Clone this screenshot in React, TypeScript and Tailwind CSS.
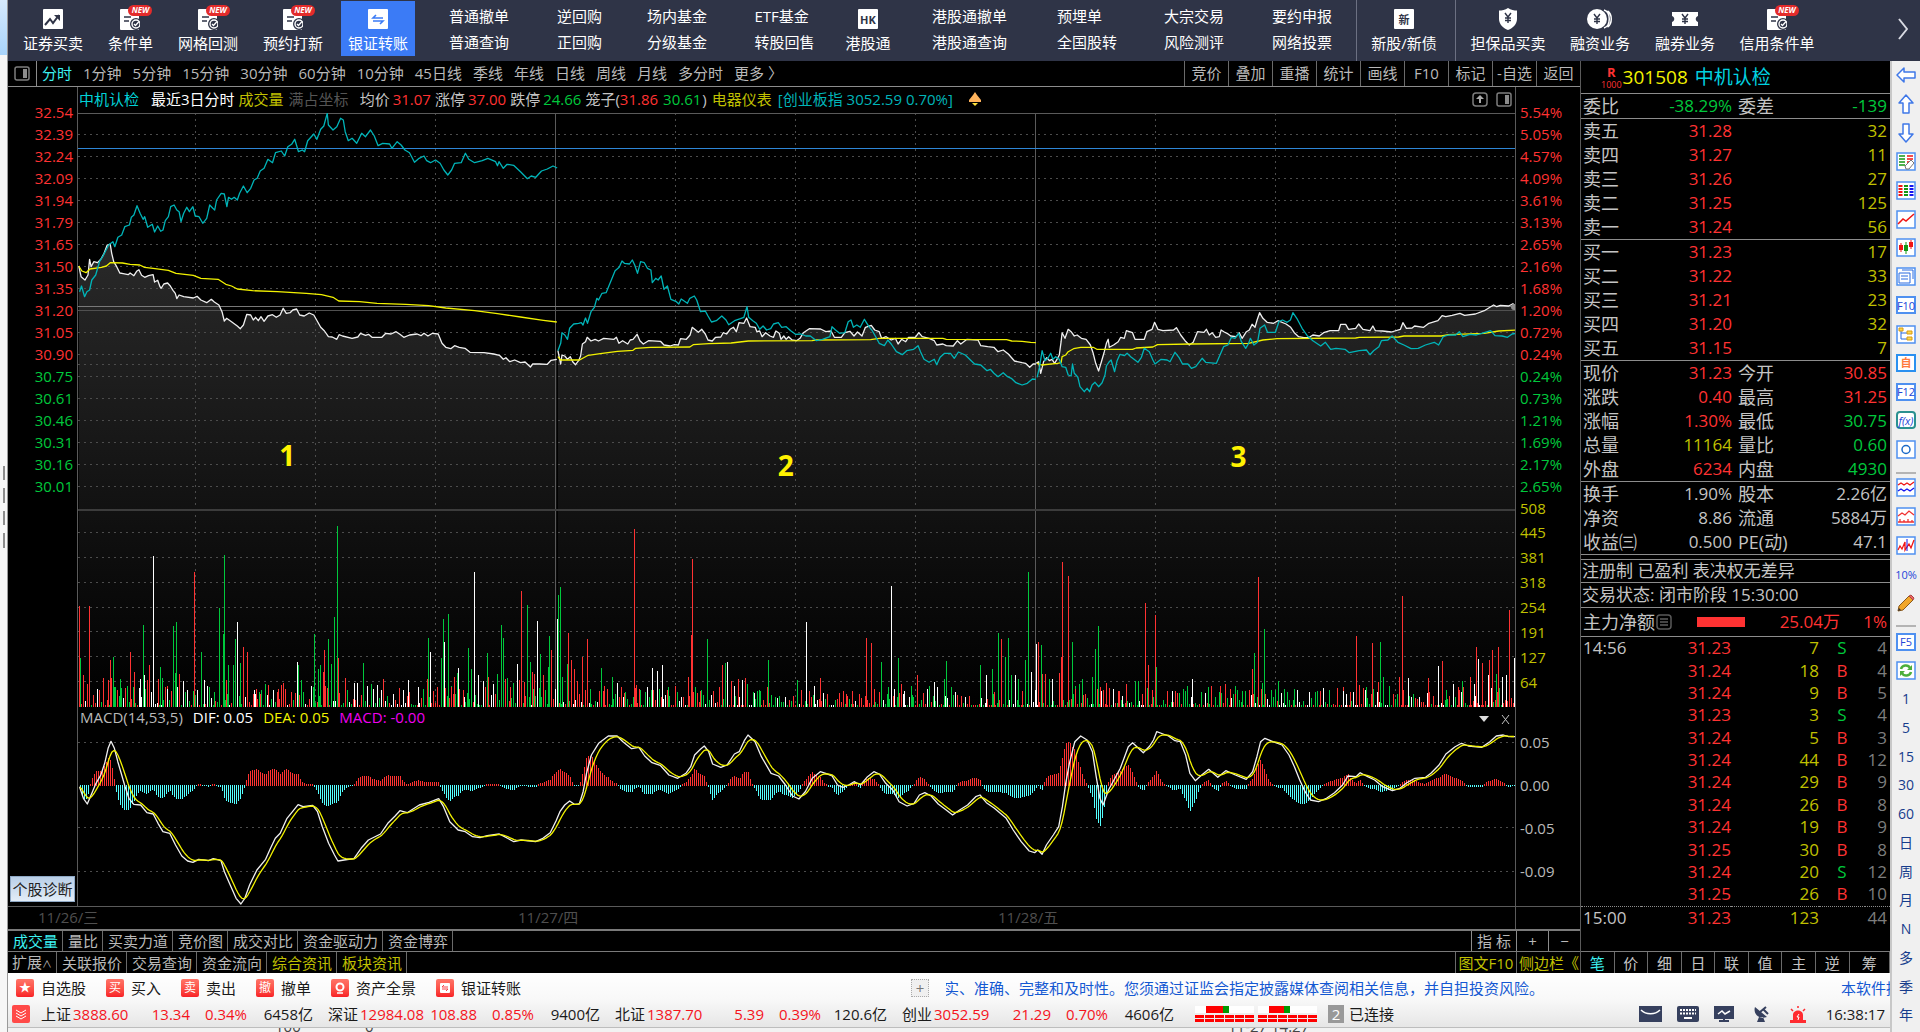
import React from "react";
import { clsx } from "clsx";

type Pt = [number, number];

// "x,y x,y ..." in digitizer units -> chart pixels
const trace = (raw: string, ox: number, oy: number, sx: number): Pt[] =>
  raw
    .trim()
    .split(/\s+/)
    .map((p) => {
      const [x, y] = p.split(",").map(Number);
      return [ox + x / sx, oy + y / 3];
    });

const toPoints = (pts: Pt[]) => pts.map(([x, y]) => `${x.toFixed(1)},${y.toFixed(1)}`).join(" ");

const DAYS = [
  {
    ox: 0,
    oy: 100,
    sx: 2.613,
    price:
      "206,498 212,530 222,540 230,525 234,478 238,500 245,485 255,488 265,475 272,460 280,435 288,432 292,460 297,485 305,500 313,519 322,521 335,524 340,519 350,527 357,514 363,509 370,526 378,532 388,527 400,524 404,546 412,541 418,560 421,565 428,552 438,549 445,558 452,571 458,580 462,596 468,585 480,590 505,594 515,589 525,600 540,608 552,598 560,606 572,615 580,635 586,663 592,655 605,665 620,678 628,686 636,675 645,643 655,645 662,660 668,652 675,662 682,650 690,664 700,648 712,644 722,652 732,645 740,625 748,640 758,638 765,630 775,627 783,645 795,648 808,639 820,645 830,665 838,682 848,693 858,710 868,711 880,718 886,704 895,708 920,715 935,711 942,700 955,706 963,703 972,712 998,712 1008,700 1022,702 1035,695 1045,703 1055,712 1070,705 1090,702 1100,707 1108,700 1118,708 1130,700 1145,702 1155,730 1165,742 1178,746 1188,737 1200,742 1215,745 1228,757 1265,758 1290,762 1305,766 1315,778 1322,773 1332,785 1345,780 1360,788 1372,786 1386,801 1392,792 1410,792 1430,793 1440,781 1455,778",
    avg: "206,498 214,513 225,518 235,507 265,502 278,498 288,488 320,489 340,493 365,495 378,502 400,505 440,511 460,520 505,526 525,535 570,538 590,553 605,558 620,567 660,572 725,575 800,580 840,584 870,592 885,603 940,605 985,610 1060,613 1120,617 1165,624 1240,632 1300,641 1360,651 1420,661 1455,666",
    index:
      "208,575 213,558 221,590 227,575 234,570 240,540 250,525 260,485 268,470 275,455 284,435 295,425 300,440 308,412 318,405 326,380 338,375 343,352 350,345 358,317 366,340 374,358 378,350 386,382 398,373 404,396 412,378 420,394 426,390 432,362 440,350 446,320 455,315 462,330 468,335 473,365 480,340 488,322 495,335 504,320 510,348 520,350 530,370 540,355 548,315 556,325 561,330 566,300 578,280 586,282 593,320 597,292 605,298 612,292 620,300 626,280 636,258 646,278 655,265 664,240 672,235 680,213 690,205 700,178 712,188 720,158 735,153 744,168 752,140 762,133 770,118 780,155 790,150 796,155 804,122 820,102 828,118 838,88 846,78 855,40 858,75 870,90 880,80 890,55 897,60 902,95 910,122 920,115 932,130 945,100 955,110 968,90 978,108 988,137 1000,130 1018,132 1024,145 1038,125 1048,135 1058,150 1070,158 1083,187 1095,175 1108,168 1115,182 1125,188 1138,180 1150,190 1160,210 1170,225 1180,210 1188,190 1205,188 1216,160 1225,178 1240,188 1260,182 1275,175 1295,185 1300,197 1304,185 1315,205 1325,193 1342,196 1360,215 1378,236 1388,228 1400,232 1415,213 1430,207 1445,198 1456,204",
  },
  {
    ox: 540,
    oy: 230,
    sx: 2.904,
    price:
      "52,362 60,402 64,375 72,378 80,388 88,380 95,395 103,404 112,392 118,378 123,342 132,335 137,322 148,333 160,328 170,333 185,325 215,328 222,322 229,340 240,332 255,342 262,330 270,328 282,313 290,332 300,342 315,332 350,334 360,345 378,348 390,344 402,345 408,326 425,328 436,315 442,292 452,300 460,307 470,298 480,312 488,330 500,333 510,322 525,321 532,308 542,312 552,298 562,292 570,305 578,278 592,280 600,264 610,290 625,292 630,305 638,303 645,320 655,308 668,318 678,322 685,303 695,310 700,328 708,318 715,328 722,320 732,330 745,332 755,325 765,308 782,296 815,297 830,305 845,303 855,322 875,322 885,308 900,304 912,318 922,306 935,318 945,292 962,286 972,300 985,305 992,325 1005,320 1020,330 1032,325 1040,342 1050,328 1062,335 1070,322 1090,322 1100,308 1110,320 1130,325 1145,332 1152,345 1170,342 1180,347 1200,348 1212,332 1222,342 1240,328 1272,330 1280,347 1300,350 1318,352 1330,365 1345,360 1360,372 1378,393 1400,398 1410,400 1422,412 1432,402 1440,402",
    avg: "52,380 60,390 115,390 140,376 175,371 225,364 270,361 278,355 320,352 435,351 445,344 490,341 555,339 605,333 790,332 800,330 960,329 985,325 1170,325 1180,328 1355,329 1370,333 1400,334 1425,337 1440,338",
    index:
      "52,362 60,340 64,308 72,315 80,328 86,295 98,282 112,280 120,278 125,285 132,264 138,280 148,245 158,232 165,205 170,210 180,190 192,188 205,155 218,122 230,112 238,93 245,100 260,102 268,90 275,105 283,130 292,95 303,98 312,115 322,120 326,158 336,145 343,150 352,138 360,178 370,168 380,208 396,215 403,222 410,207 428,220 435,205 448,198 455,210 466,245 480,243 488,258 498,276 512,272 528,258 540,270 548,284 565,272 582,266 592,262 601,230 606,262 618,272 628,280 638,298 648,288 658,300 670,296 678,282 692,278 702,292 715,290 728,302 742,313 758,312 772,318 785,318 803,332 820,328 842,320 848,290 858,300 870,310 885,308 895,275 903,270 910,292 920,285 930,292 942,268 955,290 965,302 975,320 985,340 1000,347 1010,330 1020,342 1035,365 1052,374 1065,362 1085,358 1098,347 1105,365 1115,388 1130,397 1145,388 1152,404 1162,382 1175,370 1192,370 1203,385 1215,366 1235,375 1250,390 1262,402 1280,405 1298,422 1308,418 1318,430 1330,440 1345,428 1358,440 1370,446 1382,458 1400,465 1415,460 1430,447 1440,448",
  },
  {
    ox: 1020,
    oy: 90,
    sx: 2.8,
    price:
      "45,820 52,815 58,850 66,815 75,803 82,812 90,808 97,820 105,805 110,795 115,755 118,728 126,745 135,718 143,725 152,738 160,735 172,745 185,748 197,765 205,790 212,820 220,843 228,815 236,785 242,760 247,748 250,772 262,765 275,755 282,742 292,745 298,722 315,728 322,748 348,748 355,725 370,718 377,697 386,718 400,722 430,720 438,713 450,735 462,752 474,765 485,757 497,725 515,727 522,718 530,735 538,728 548,742 558,740 563,720 572,726 580,730 590,738 605,740 614,728 622,745 634,725 642,720 650,703 658,712 664,690 671,668 680,685 692,697 710,700 722,692 745,702 758,712 768,728 780,740 795,743 810,742 820,735 838,738 850,728 868,722 892,722 898,703 912,703 920,718 940,715 948,702 960,718 980,722 988,708 995,722 1015,723 1040,726 1065,718 1072,698 1082,715 1098,714 1105,708 1130,712 1145,700 1170,692 1182,677 1192,680 1210,676 1232,670 1245,676 1275,672 1300,662 1318,650 1326,645 1335,650 1345,646 1368,648 1380,641 1390,650",
    avg: "48,820 60,825 105,820 115,818 118,800 128,795 135,785 150,776 170,772 205,772 215,778 315,778 325,774 372,771 385,764 480,762 640,760 680,750 720,746 940,744 950,742 1060,741 1075,738 1180,738 1200,734 1300,730 1340,723 1390,720",
    index:
      "48,862 55,830 62,782 70,812 78,805 86,790 92,808 100,800 110,808 118,830 128,832 135,855 143,858 147,822 152,850 162,862 168,890 180,905 188,895 195,905 202,885 210,877 220,890 230,878 238,855 242,828 250,815 255,810 265,845 272,812 280,793 292,797 300,790 310,800 330,817 340,802 348,775 362,785 372,810 378,822 395,808 412,810 420,815 434,787 445,802 455,822 470,822 480,835 492,830 510,805 520,817 550,820 560,795 570,770 582,765 592,742 602,745 612,730 620,755 632,775 640,760 645,745 655,765 665,757 672,715 685,705 693,727 715,727 725,695 735,690 748,697 757,690 764,668 775,685 790,715 805,738 820,752 842,768 855,757 870,778 885,775 910,778 922,788 950,782 970,780 980,794 990,782 1005,770 1012,752 1030,750 1042,738 1058,757 1075,765 1095,776 1115,775 1135,765 1160,757 1172,765 1185,740 1200,735 1220,735 1230,725 1240,740 1260,733 1278,735 1300,728 1318,722 1330,737 1350,738 1365,742 1378,732 1390,730",
  },
];

// colour letter, x, top of the bar
const VOL_A =
  "r164,348 g166,503 r171,556 r179,582 r184,348 r192,615 w200,597 r205,600 r212,563 r222,570 r226,510 r230,565 g233,500 g236,592 g247,567 w254,625 r269,485 g275,592 r277,545 w288,567 g295,405 w298,556 r304,570 r308,526 w311,606 w316,198 r325,567 g331,530 g334,565 r340,590 w345,597 g357,408 g360,548 g364,397 r370,552 w378,573 r400,247 w407,600 g414,485 w420,570 g432,592 g441,606 g452,353 g460,432 g462,195 r467,570 g470,526 g480,526 g484,447 w488,397 g496,518 r502,472 r510,485 w525,600 r529,597 r537,612 g546,582 r553,586 w563,600 r573,597 r579,586 r583,578 w613,515 g615,526 g620,570 r637,628 g648,432 g656,537 g661,526 r666,545 r669,480 g677,447 g682,522 g689,380 g695,108 r697,503 r711,563 w731,578 w736,578 r744,615 g749,518 w757,588 g765,582 w770,597 w778,586 w785,600 r790,567 w811,612 w832,600 w842,570 w862,592 r880,567 g883,443 w887,485 g909,503 g914,387 w916,455 g924,372 r930,592 r936,560 g942,548 w945,533 w957,620 g965,473 g971,537 w978,247 w986,556 w997,573 g1005,488 r1007,560 w1018,582 g1025,552 g1033,405 g1038,443 r1041,567 g1046,563 r1053,590 g1058,578 w1067,522 r1070,570 r1075,304 r1082,576 g1087,345 g1094,515 r1098,545 r1102,552 w1107,394 g1115,492 r1120,556 g1130,530 g1132,439 r1136,480 w1149,387 g1151,315 g1156,292 g1160,560 g1170,522 r1172,428 r1179,510 r1184,537 r1191,573 r1201,500 r1206,600 r1211,447 g1218,597 g1239,533 r1247,588 g1262,560 w1273,578 r1282,590 r1287,608 r1308,117 r1312,586 g1321,600 w1335,590 w1345,533 w1355,542 w1366,526 g1378,592 r1420,560 r1426,435 r1428,206 g1433,592 r1445,604 g1459,447 w1467,620 r1490,526 g1495,520 w1499,515 r1508,573 w1514,588 r1522,567 w1530,570 r1536,563 g1541,582 w1556,608 g1565,600";
const VOL_B =
  "g38,603 g52,510 w69,625 g106,570 r114,600 w123,397 w139,588 r150,563 r197,612 r209,603 r235,443 r244,458 r250,597 g263,515 g277,590 w282,288 w288,597 g295,503 r301,582 w307,603 g322,614 r331,556 w363,577 g381,567 g384,514 g394,590 g449,525 w459,556 g470,537 r475,606 g482,428 r487,447 g494,500 g500,443 g506,556 w514,556 g519,567 r526,603 g533,510 g538,247 w543,545 w552,462 r556,455 g562,466 r564,552 r570,552 g576,567 w582,567 r595,548 r599,500 r601,217 r612,259 g620,455 r626,597 g632,582 g639,567 g657,560 g662,477 g668,409 r672,592 r677,600 r683,578 r688,595 r706,603 w714,618 r720,582 g737,573 g743,573 r751,612 r757,338 r762,526 r770,600 r774,375 g777,530 w807,603 r812,604 g820,608 w844,567 w868,610 g874,590 r896,588 r905,582 r914,597 r925,612 g937,603 r950,622 r956,537 g960,488 r968,262 r972,597 g975,578 g979,417 g1005,573 g1016,597 g1035,597 w1062,605 r1082,603 w1125,603 w1131,612 r1138,606 r1150,439 r1155,585 g1168,590 r1180,458 r1191,577 g1194,455 g1201,560 r1230,560 r1236,319 w1248,563 w1268,622 r1285,563 w1303,529 r1311,514 g1318,600 w1332,582 r1340,592 g1348,573 r1362,560 w1370,582 r1374,472 w1378,507 r1385,518 w1396,555 r1399,510 r1404,480 g1411,552 r1416,472 w1423,560 w1430,556 r1436,360 w1448,503";

const VOL_COLORS: Record<string, string> = { r: "#ff3232", g: "#00c83c", w: "#ffffff" };
const VOL_BASE = 707;

type Bar = { x: number; top: number; fill: string };

const parseBars = (raw: string, ox: number, sx: number): Bar[] =>
  raw.split(" ").map((b) => {
    const [x, y] = b.slice(1).split(",").map(Number);
    return { x: Math.min(1514, Math.round(ox + x / sx)), top: Math.round(490 + y / 3), fill: VOL_COLORS[b[0]] };
  });

const quietBars = (): Bar[] => {
  const bars: Bar[] = [];
  let seed = 11;
  const rand = () => {
    seed = (seed * 16807) % 2147483647;
    return seed / 2147483647;
  };
  for (let x = 79; x < 1515; x += 2) {
    const h = 2 + Math.floor(Math.pow(rand(), 2.2) * 20);
    const c = "rgwrg"[Math.floor(rand() * 5)];
    bars.push({ x, top: VOL_BASE - h, fill: VOL_COLORS[c] });
  }
  return bars;
};

const VOLUME = [...quietBars(), ...parseBars(VOL_A, 0, 2.063), ...parseBars(VOL_B, 740, 1.867)];

const DIF: Pt[] = [
  ...trace(
    "164,890 172,925 180,942 188,915 198,880 208,855 216,820 223,775 229,754 236,775 243,815 250,850 258,890 266,925 276,943 290,945 303,968 316,972 326,1000 336,1025 350,1030 362,1065 375,1098 387,1113 398,1117 410,1108 430,1112 440,1106 456,1112 463,1145 475,1185 487,1225 497,1242 505,1225 515,1185 530,1140 548,1108 558,1075 568,1045 578,1030 592,985 605,962 615,944 625,950 645,946 655,965 665,1010 678,1060 690,1095 697,1113 710,1110 730,1106 745,1075 760,1050 785,1032 800,1000 815,978 825,962 840,968 865,945 885,937 905,926 915,950 928,995 945,1020 960,1025 975,1040 990,1043 1005,1037 1030,1032 1045,1043 1060,1055 1075,1050 1105,1055 1120,1045 1135,1028 1147,993 1155,965 1165,945 1175,933 1185,943 1195,942 1203,905 1210,850 1220,795 1235,760 1255,738 1273,738 1285,755 1303,776 1318,772 1330,798 1345,818 1362,826 1380,855 1398,865 1415,850 1425,830 1433,795 1445,778 1453,768 1462,785 1470,822 1487,832 1500,825 1515,792 1525,785",
    0, 490, 2.063
  ),
  ...trace(
    "8,752 15,735 28,755 40,800 58,850 72,858 85,885 98,918 110,927 122,905 135,865 150,845 160,850 172,858 182,885 192,892 203,885 213,875 225,885 238,860 250,845 260,852 272,880 285,900 297,935 312,948 325,940 335,915 345,908 357,918 370,942 385,960 397,975 410,960 425,945 440,920 448,915 460,938 475,955 497,985 510,1020 525,1055 540,1083 550,1088 556,1080 564,1093 572,1065 585,1035 595,1010 602,950 608,880 615,820 625,755 636,738 648,750 658,785 665,860 672,925 678,945 688,900 700,865 710,835 718,800 725,770 733,758 742,772 753,788 765,768 772,750 778,725 790,732 800,738 812,752 822,755 832,795 840,850 850,872 862,855 875,838 892,862 907,842 925,855 945,868 957,845 965,800 972,755 980,745 995,755 1012,765 1025,795 1035,830 1045,870 1055,905 1065,930 1080,935 1095,925 1110,908 1125,885 1135,858 1150,860 1158,848 1172,860 1185,870 1200,890 1218,902 1232,895 1245,878 1260,865 1280,862 1290,850 1305,825 1318,792 1335,770 1347,760 1360,768 1385,772 1400,755 1412,738 1425,735 1435,740 1448,740",
    740, 490, 1.867
  ),
];

const valueAt = (pts: Pt[], x: number) => {
  for (let i = 1; i < pts.length; i++) {
    if (pts[i][0] >= x) {
      const [x0, y0] = pts[i - 1];
      const [x1, y1] = pts[i];
      return y0 + ((y1 - y0) * (x - x0)) / (x1 - x0 || 1);
    }
  }
  return pts[pts.length - 1][1];
};

// DEA is the 5 period EMA of DIF, the histogram is twice the spread
const macd = () => {
  const dea: Pt[] = [];
  const hist: { x: number; h: number }[] = [];
  let ema = DIF[0][1];
  for (let x = 80; x <= 1514; x += 2) {
    const dif = valueAt(DIF, x);
    ema = ema + (dif - ema) / 3;
    dea.push([x, ema]);
    hist.push({ x, h: Math.round((ema - dif) * 2) });
  }
  return { dea, hist };
};
const { dea: DEA, hist: HIST } = macd();

const PRICES = ["32.54", "32.39", "32.24", "32.09", "31.94", "31.79", "31.65", "31.50", "31.35", "31.20", "31.05", "30.90", "30.75", "30.61", "30.46", "30.31", "30.16", "30.01"];
const PERCENTS = ["5.54%", "5.05%", "4.57%", "4.09%", "3.61%", "3.13%", "2.65%", "2.16%", "1.68%", "1.20%", "0.72%", "0.24%", "0.24%", "0.73%", "1.21%", "1.69%", "2.17%", "2.65%"];
const VOLUMES = ["445", "381", "318", "254", "191", "127", "64"];
const MACD_TICKS = ["0.05", "0.00", "-0.05", "-0.09"];

/* ---------- top toolbar ---------- */

const DocTrend = () => (
  <svg width="20" height="20" viewBox="0 0 20 20">
    <rect width="20" height="20" rx="1" fill="#fff" />
    <path d="M2 16l5-6 3 4 6-8" fill="none" stroke="#2f3447" strokeWidth="2" />
    <path d="M11 6h6v6z" fill="#2f3447" />
  </svg>
);

const DocCheck = () => (
  <span className="relative">
    <svg width="20" height="21" viewBox="0 0 20 21">
      <path d="M0 1a1 1 0 011-1h18v21H1a1 1 0 01-1-1z" fill="#fff" />
      <path d="M4 8h7M4 12h5" stroke="#2f3447" strokeWidth="1.5" />
      <circle cx="16" cy="15" r="6" fill="#2f3447" />
      <circle cx="16" cy="15" r="4" fill="none" stroke="#fff" strokeWidth="1.4" />
      <path d="M14 15l1.500 1.500L19 12.500" fill="none" stroke="#fff" strokeWidth="1.3" />
    </svg>
    <span className="absolute -top-1 left-2 flex h-[11px] w-6 items-center justify-center rounded-full bg-[#e32b2b] text-[8px] font-bold italic leading-none text-white">
      NEW
    </span>
  </span>
);

const Transfer = () => (
  <svg width="20" height="20" viewBox="0 0 20 20">
    <rect width="20" height="20" rx="1" fill="#fff" />
    <path d="M15 9H5l3-3M5 12h10l-3 3" fill="none" stroke="#3b7bf6" strokeWidth="1.6" />
  </svg>
);

const Yen = ({ x }: { x: number }) => (
  <path d={`M${x - 3} 5l3 4 3-4M${x} 9v6M${x - 3} 10h6M${x - 3} 12.500h6`} fill="none" stroke="#2f3447" strokeWidth="1.4" />
);

const Shield = () => (
  <svg width="20" height="22" viewBox="0 0 20 22">
    <path d="M10 0c3 2 6 2.500 9 2.500V11c0 5-4 9-9 11-5-2-9-6-9-11V2.500C4 2.500 7 2 10 0z" fill="#fff" />
    <Yen x={10} />
  </svg>
);

const Coins = () => (
  <svg width="25" height="20" viewBox="0 0 25 20">
    <ellipse cx="10" cy="10" rx="10" ry="10" fill="#fff" />
    <path d="M17 1c7 2 7 16 0 18M20.500 2c5 3 5 13 0 16" fill="none" stroke="#fff" strokeWidth="1.5" />
    <Yen x={10} />
  </svg>
);

const Ticket = () => (
  <svg width="26" height="20" viewBox="0 0 26 20">
    <path d="M0 3h26v4c-3 1-3 5 0 6v4H0v-4c3-1 3-5 0-6z" fill="#fff" />
    <Yen x={13} />
  </svg>
);

const GlyphTile = ({ children }: { children: React.ReactNode }) => (
  <span className="flex size-5 items-center justify-center rounded-[1px] bg-white text-[11px] font-bold leading-none text-[#2f3447]">{children}</span>
);

const IconItem = ({ icon, label, active, className }: { icon: React.ReactNode; label: string; active?: boolean; className?: string }) => (
  <div className={clsx("flex justify-center", className)}>
    <button
      className={clsx(
        "mt-px flex h-[55px] flex-col items-center gap-1 whitespace-nowrap pt-2 leading-5",
        active && "bg-[#3b7bf6] px-[7px]"
      )}
    >
      <span className="flex h-5 items-center">{icon}</span>
      {label}
    </button>
  </div>
);

const PairItem = ({ items, className }: { items: [string, string]; className?: string }) => (
  <div className={clsx("flex justify-center", className)}>
    <div className="flex flex-col items-start gap-[6px] whitespace-nowrap pt-[6px] leading-5">
      <button>{items[0]}</button>
      <button>{items[1]}</button>
    </div>
  </div>
);

const Toolbar = () => (
  <header className="grid h-[61px] grid-cols-[90fr_65fr_90fr_80fr_90fr_112fr_89fr_106fr_109fr_58fr_145fr_90fr_124fr_100fr_99fr_105fr_80fr_90fr_94fr_96fr] bg-[#2f3447] text-[15px] text-white">
    <IconItem icon={<DocTrend />} label="证券买卖" />
    <IconItem icon={<DocCheck />} label="条件单" />
    <IconItem icon={<DocCheck />} label="网格回测" />
    <IconItem icon={<DocCheck />} label="预约打新" />
    <IconItem icon={<Transfer />} label="银证转账" active />
    <PairItem items={["普通撤单", "普通查询"]} />
    <PairItem items={["逆回购", "正回购"]} />
    <PairItem items={["场内基金", "分级基金"]} />
    <PairItem items={["ETF基金", "转股回售"]} />
    <IconItem icon={<GlyphTile>HK</GlyphTile>} label="港股通" />
    <PairItem items={["港股通撤单", "港股通查询"]} />
    <PairItem items={["预埋单", "全国股转"]} />
    <PairItem items={["大宗交易", "风险测评"]} />
    <PairItem items={["要约申报", "网络投票"]} className="pr-2" />
    <IconItem icon={<GlyphTile>新</GlyphTile>} label="新股/新债" className="border-l border-[#6c7082] pr-1" />
    <IconItem icon={<Shield />} label="担保品买卖" className="border-l border-[#6c7082]" />
    <IconItem icon={<Coins />} label="融资业务" />
    <IconItem icon={<Ticket />} label="融券业务" />
    <IconItem icon={<DocCheck />} label="信用条件单" />
    <button className="flex items-center justify-end pb-1 pr-3" aria-label="更多">
      <svg width="10" height="22" viewBox="0 0 10 22">
        <path d="M1 1l8 10-8 10" fill="none" stroke="#d8dae2" strokeWidth="2" />
      </svg>
    </button>
  </header>
);

/* ---------- chart column ---------- */

const PanelGlyph = () => (
  <svg width="16" height="15" viewBox="0 0 16 15">
    <rect x="1" y="1" width="14" height="13" rx="2" fill="none" stroke="#7d7d7d" strokeWidth="1.500" />
    <rect x="9" y="3" width="4" height="9" fill="#8b8b8b" />
  </svg>
);

const PERIODS = ["分时", "1分钟", "5分钟", "15分钟", "30分钟", "60分钟", "10分钟", "45日线", "季线", "年线", "日线", "周线", "月线", "多分时", "更多 〉"];
const ACTIONS = ["竞价", "叠加", "重播", "统计", "画线", "F10", "标记", "-自选", "返回"];

const PeriodBar = () => (
  <nav className="flex h-[26px] items-stretch whitespace-nowrap border-b border-[#8c8c8c] text-[#b9b9b9]">
    <button className="flex w-[29px] items-center justify-center border-r border-[#8c8c8c]" aria-label="侧栏">
      <PanelGlyph />
    </button>
    <div className="flex gap-[11px] pl-[5px]">
      {PERIODS.map((p, i) => (
        <button key={p} className={clsx(i === 0 && "text-[#3cf0f0]")}>
          {p}
        </button>
      ))}
    </div>
    <div className="ml-auto flex">
      {ACTIONS.map((a) => (
        <button key={a} className="w-11 border-l border-[#6a6a6a]">
          {a}
        </button>
      ))}
    </div>
  </nav>
);

const InfoLine = () => (
  <div className="flex h-[26px] items-center whitespace-nowrap pb-[2px] pl-px text-[#c4c4c4]">
    <span className="text-[#00d2d8]">中机认检</span>
    <span className="ml-3 text-white">最近3日分时</span>
    <span className="ml-1 text-[#c0c000]">成交量</span>
    <span className="ml-[5px] text-[#555]">满占坐标</span>
    <span className="ml-[11px]">均价</span>
    <span className="ml-[3px] text-[#ff3232]">31.07</span>
    <span className="ml-1">涨停</span>
    <span className="ml-[3px] text-[#ff3232]">37.00</span>
    <span className="ml-1">跌停</span>
    <span className="ml-[3px] text-[#00c83c]">24.66</span>
    <span className="ml-1">笼子(</span>
    <span className="text-[#ff3232]">31.86</span>
    <span className="ml-[5px] text-[#00c83c]">30.61</span>
    <span className="ml-px">)</span>
    <span className="ml-[5px] text-[#c0c000]">电器仪表</span>
    <span className="ml-[6px] text-[#00b4b8]">[创业板指 3052.59 0.70%]</span>
    <svg className="ml-4" width="12" height="14" viewBox="0 0 12 14">
      <path d="M6 0l2 3 4 5v2H0V8l4-5z" fill="#ffb35c" />
      <path d="M3 11h6l-3 3z" fill="#ffe23c" />
    </svg>
    <span className="ml-auto flex gap-2 pr-[3px]">
      <svg width="16" height="15" viewBox="0 0 16 15">
        <rect x="1" y="1" width="14" height="13" rx="3" fill="none" stroke="#7d7d7d" strokeWidth="1.500" />
        <path d="M8 3l4 4H9v4H7V7H4z" fill="#aaa" />
      </svg>
      <PanelGlyph />
    </span>
  </div>
);

const ROWS = Array.from({ length: 17 }, (_, i) => 134.5 + i * 22).filter((y) => y !== 310.5);
const VOL_ROWS = [532.5, 557.5, 582.5, 607.5, 631.5, 656.5, 681.5];
const COLS = [195.5, 315.5, 435.5, 675.5, 795.5, 915.5, 1155.5, 1275.5, 1395.5];

const PriceChart = () => (
  <div className="relative">
    <svg className="block h-[594px] w-full" viewBox="78 113 1437 594" preserveAspectRatio="none">
      <defs>
        <linearGradient id="shade" gradientUnits="userSpaceOnUse" x1="0" y1="113" x2="0" y2="707">
          <stop offset="0" stopColor="#353535" />
          <stop offset="1" stopColor="#000" />
        </linearGradient>
      </defs>
      {DAYS.map((d, i) => {
        const pts = trace(d.price, d.ox, d.oy, d.sx);
        const first = pts[0][0];
        const last = pts[pts.length - 1][0];
        return <polygon key={i} points={`${first},707 ${toPoints(pts)} ${last},707`} fill="url(#shade)" />;
      })}
      <g shapeRendering="crispEdges" fill="none">
        <g stroke="#4c4c4c" strokeDasharray="2 4">
          {[...ROWS, 364.5, ...VOL_ROWS].map((y) => (
            <path key={y} d={`M78 ${y}H1515`} />
          ))}
          {COLS.map((x) => (
            <path key={x} d={`M${x} 113V707`} />
          ))}
        </g>
        <path d="M78 113.500H1515" stroke="#5a5a5a" />
        <path d="M555.500 113V707M1035.500 113V707" stroke="#5a5a5a" />
        <path d="M78 306.500H1515" stroke="#787878" />
        <path d="M78 310.500H1515" stroke="#505050" />
        <path d="M78 510H1515" stroke="#3c3c3c" strokeWidth="2" />
        <path d="M78 148.500H1515" stroke="#2e86d6" />
      </g>
      <g shapeRendering="crispEdges">
        {VOLUME.map((b, i) => (
          <rect key={i} x={b.x} y={b.top} width="1" height={VOL_BASE - b.top} fill={b.fill} />
        ))}
      </g>
      {DAYS.map((d, i) => (
        <g key={i} fill="none" strokeWidth="1.300" strokeLinejoin="round">
          <polyline points={toPoints(trace(d.price, d.ox, d.oy, d.sx))} stroke="#f0f0f0" />
          <polyline points={toPoints(trace(d.avg, d.ox, d.oy, d.sx))} stroke="#f2f200" />
          <polyline points={toPoints(trace(d.index, d.ox, d.oy, d.sx))} stroke="#00b4b8" />
        </g>
      ))}
      <circle cx="1514" cy="307" r="3" fill="#8c8c8c" />
    </svg>
    <span className="absolute left-[14%] top-[322px] text-[28px] font-bold leading-10 text-[#fff200]">1</span>
    <span className="absolute left-[48.7%] top-[332px] text-[28px] font-bold leading-10 text-[#fff200]">2</span>
    <span className="absolute left-[80.2%] top-[323px] text-[28px] font-bold leading-10 text-[#fff200]">3</span>
  </div>
);

const MacdChart = () => (
  <>
    <div className="flex h-[22px] items-center gap-[10px] whitespace-nowrap pb-[2px] pl-[2px] text-[#b9b9b9]">
      <span>MACD(14,53,5)</span>
      <span className="text-white">DIF: 0.05</span>
      <span className="text-[#f2f200]">DEA: 0.05</span>
      <span className="text-[#f000f0]">MACD: -0.00</span>
      <span className="ml-auto flex items-center gap-3 pr-[5px] pt-1">
        <button aria-label="展开">
          <svg width="10" height="6" viewBox="0 0 10 6">
            <path d="M0 0h10L5 6z" fill="#ddd" />
          </svg>
        </button>
        <button aria-label="关闭">
          <svg width="9" height="9" viewBox="0 0 9 9">
            <path d="M1 0l7 9M8 0L1 9" stroke="#c4c4c4" />
          </svg>
        </button>
      </span>
    </div>
    <svg className="block h-[177px] w-full" viewBox="78 729 1437 177" preserveAspectRatio="none">
      <g shapeRendering="crispEdges">
        <g stroke="#4c4c4c" strokeDasharray="2 4">
          <path d="M78 742.500H1515M78 827.500H1515M78 871.500H1515" />
        </g>
        {HIST.map(({ x, h }) =>
          h > 0 ? (
            <rect key={x} x={x} y={785 - h} width="1" height={h + 1} fill="#ff3232" />
          ) : (
            <rect key={x} x={x} y="785" width="1" height={1 - h} fill="#54ffff" />
          )
        )}
      </g>
      <g fill="none" strokeWidth="1.300" strokeLinejoin="round">
        <polyline points={toPoints(DIF)} stroke="#f0f0f0" />
        <polyline points={toPoints(DEA)} stroke="#f2f200" />
      </g>
    </svg>
  </>
);

const ChartArea = () => (
  <div className="flex border-b border-[#5a5a5a]">
    <div className="flex w-[70px] shrink-0 flex-col border-r border-[#5a5a5a] pt-[14px]">
      {PRICES.map((p, i) => (
        <span key={p} className={clsx("h-[22px] pr-1 text-right leading-[22px]", i < 12 ? "text-[#ff3232]" : "text-[#00c83c]")}>
          {p}
        </span>
      ))}
      <button className="mx-[2px] mb-1 mt-auto h-[26px] whitespace-nowrap border border-[#8fa9c6] bg-linear-to-b from-[#b9cfe8] to-[#e3edf8] text-[#222]">
        个股诊断
      </button>
    </div>
    <div className="min-w-0 flex-1 border-r border-[#5a5a5a]">
      <InfoLine />
      <PriceChart />
      <MacdChart />
    </div>
    <div className="flex w-16 shrink-0 flex-col pl-1 pt-[14px]">
      {PERCENTS.map((p, i) => (
        <span key={i} className={clsx("h-[22px] leading-[22px]", i < 12 ? "text-[#ff3232]" : "text-[#00c83c]")}>
          {p}
        </span>
      ))}
      <span className="mb-px h-[22px] leading-[22px] text-[#c0c000]">508</span>
      {VOLUMES.map((v) => (
        <span key={v} className="h-[25px] leading-[25px] text-[#c0c000]">
          {v}
        </span>
      ))}
      {MACD_TICKS.map((v, i) => (
        <span key={v} className={clsx("h-[43px] leading-[43px] text-[#b9b9b9]", i === 0 && "mt-[26px]")}>
          {v}
        </span>
      ))}
    </div>
  </div>
);

const DateRow = () => (
  <div className="flex h-[22px] leading-5 text-[#4f4f4f]">
    <div className="grid flex-1 grid-cols-[480fr_480fr_517fr] border-r border-[#5a5a5a] pl-[30px]">
      <span>11/26/三</span>
      <span>11/27/四</span>
      <span>11/28/五</span>
    </div>
    <div className="w-16" />
  </div>
);

const INDICATORS = ["成交量", "量比", "买卖力道", "竞价图", "成交对比", "资金驱动力", "资金博弈"];
const EXTRAS = ["关联报价", "交易查询", "资金流向", "综合资讯", "板块资讯"];

const IndicatorTabs = () => (
  <>
    <nav className="flex h-[22px] whitespace-nowrap border-t-2 border-[#7a7a7a] leading-5 text-[#b9b9b9]">
      {INDICATORS.map((t, i) => (
        <button key={t} className={clsx("border-r border-[#6a6a6a] pl-[5px] pr-1", i === 0 && "text-[#3cf0f0]")}>
          {t}
        </button>
      ))}
      <span className="ml-auto flex">
        <button className="w-[45px] border-l border-[#8c8c8c]">指 标</button>
        <button className="w-8 border-l border-[#8c8c8c]">+</button>
        <button className="w-8 border-l border-[#8c8c8c]">−</button>
      </span>
    </nav>
    <nav className="flex h-[22px] whitespace-nowrap border-t border-[#7a7a7a] leading-5 text-[#b9b9b9]">
      <button className="w-[49px] border-r border-[#6a6a6a]">
        扩展<span className="text-[10px]">∧</span>
      </button>
      {EXTRAS.map((t, i) => (
        <button key={t} className={clsx("border-r border-[#6a6a6a] pl-[5px] pr-1", i > 2 && "text-[#c0c000]")}>
          {t}
        </button>
      ))}
      <span className="ml-auto flex text-[#c0c000]">
        <button className="w-[61px] border-l border-[#6a6a6a]">图文F10</button>
        <button className="w-16 overflow-hidden border-l border-[#6a6a6a] pl-[2px] text-left">侧边栏《</button>
      </span>
    </nav>
  </>
);

/* ---------- quote panel ---------- */

const RED = "text-[#ff3232]";
const GREEN = "text-[#00c83c]";
const YELLOW = "text-[#c0c000]";
const GRAY = "text-[#c4c4c4]";

const ASKS = [["卖五", "31.28", "32"], ["卖四", "31.27", "11"], ["卖三", "31.26", "27"], ["卖二", "31.25", "125"], ["卖一", "31.24", "56"]];
const BIDS = [["买一", "31.23", "17"], ["买二", "31.22", "33"], ["买三", "31.21", "23"], ["买四", "31.20", "32"], ["买五", "31.15", "7"]];

const STATS = [
  ["现价", "31.23", RED, "今开", "30.85", RED],
  ["涨跌", "0.40", RED, "最高", "31.25", RED],
  ["涨幅", "1.30%", RED, "最低", "30.75", GREEN],
  ["总量", "11164", YELLOW, "量比", "0.60", GREEN],
  ["外盘", "6234", RED, "内盘", "4930", GREEN],
];
const BASICS = [
  ["换手", "1.90%", GRAY, "股本", "2.26亿", GRAY],
  ["净资", "8.86", GRAY, "流通", "5884万", GRAY],
  ["收益㈢", "0.500", GRAY, "PE(动)", "47.1", GRAY],
];
const SUMMARY = [["委比", "-38.29%", GREEN, "委差", "-139", GREEN]];

const TICKS = [
  ["14:56", "31.23", "7", "S", "4"],
  ["", "31.24", "18", "B", "4"],
  ["", "31.24", "9", "B", "5"],
  ["", "31.23", "3", "S", "4"],
  ["", "31.24", "5", "B", "3"],
  ["", "31.24", "44", "B", "12"],
  ["", "31.24", "29", "B", "9"],
  ["", "31.24", "26", "B", "8"],
  ["", "31.24", "19", "B", "9"],
  ["", "31.25", "30", "B", "8"],
  ["", "31.24", "20", "S", "12"],
  ["", "31.25", "26", "B", "10"],
  ["15:00", "31.23", "123", "", "44"],
];

const OrderTable = ({ rows }: { rows: string[][] }) => (
  <table className="w-full table-fixed border-separate border-spacing-0 border-b border-[#8c8c8c]">
    <tbody>
      {rows.map(([label, price, qty]) => (
        <tr key={label} className="h-6">
          <th className="w-[60px] p-0 pl-[2px] text-left text-[18px] font-normal">{label}</th>
          <td className={clsx("w-[91px] p-0 text-right", RED)}>{price}</td>
          <td className={clsx("p-0 pr-[3px] text-right", YELLOW)}>{qty}</td>
        </tr>
      ))}
    </tbody>
  </table>
);

const PairTable = ({ rows }: { rows: string[][] }) => (
  <table className="w-full table-fixed border-separate border-spacing-0 border-b border-[#8c8c8c]">
    <tbody>
      {rows.map(([l1, v1, c1, l2, v2, c2]) => (
        <tr key={l1} className="h-6 whitespace-nowrap">
          <th className="w-[60px] p-0 pl-[2px] text-left text-[18px] font-normal">{l1}</th>
          <td className={clsx("w-[91px] p-0 text-right", c1)}>{v1}</td>
          <th className="w-[70px] p-0 pl-[6px] text-left text-[18px] font-normal">{l2}</th>
          <td className={clsx("p-0 pr-[3px] text-right", c2)}>{v2}</td>
        </tr>
      ))}
    </tbody>
  </table>
);

const QUOTE_TABS = ["笔", "价", "细", "日", "联", "值", "主", "逆", "筹"];

const QuotePanel = () => (
  <aside className="flex w-[310px] shrink-0 flex-col border-l border-[#5a5a5a] text-[17px] leading-[22px] text-[#c4c4c4]">
    <h1 className="flex h-[33px] items-center border-b border-[#8c8c8c] pl-[20px] text-[19px]">
      <span className={clsx("flex flex-col items-center text-[9px] leading-[10px]", RED)}>
        <b className="text-[13px] leading-4">R</b>
        <span>1000</span>
      </span>
      <span className="ml-px text-[#f2f200]">301508</span>
      <span className="ml-[7px] text-[#00d2e0]">中机认检</span>
    </h1>
    <PairTable rows={SUMMARY} />
    <OrderTable rows={ASKS} />
    <OrderTable rows={BIDS} />
    <PairTable rows={STATS} />
    <PairTable rows={BASICS} />
    <p className="mt-1 h-6 border-b border-t border-[#8c8c8c] pl-px">注册制 已盈利 表决权无差异</p>
    <p className="h-[25px] border-b border-[#8c8c8c] pl-px leading-6">交易状态: 闭市阶段 15:30:00</p>
    <div className="flex h-[29px] items-center border-b border-[#8c8c8c] pl-[2px]">
      <span className="w-[73px] whitespace-nowrap text-[18px]">主力净额</span>
      <svg width="16" height="16" viewBox="0 0 16 16">
        <rect x="1" y="1" width="14" height="14" rx="3" fill="none" stroke="#5a5a5a" strokeWidth="1.500" />
        <path d="M4 5h8M4 8h8M4 11h8" stroke="#8c8c8c" />
      </svg>
      <span className="ml-[25px] h-[10px] w-12 bg-[#ff3232]" />
      <span className={clsx("ml-auto", RED)}>25.04万</span>
      <span className={clsx("w-[50px] pr-[3px] text-right", RED)}>1%</span>
    </div>
    <table className="h-[292px] w-full table-fixed">
      <tbody>
        {TICKS.map(([time, price, vol, side, n], i) => (
          <tr key={i} className={clsx(i === 12 && "border-t border-dotted border-[#8c8c8c]")}>
            <td className="w-[60px] p-0 pl-[2px]">{time}</td>
            <td className={clsx("w-[90px] p-0 text-right", RED)}>{price}</td>
            <td className={clsx("w-[88px] p-0 text-right", YELLOW)}>{vol}</td>
            <td className={clsx("w-[46px] p-0 text-center", side === "B" ? RED : GREEN)}>{side}</td>
            <td className="p-0 pr-[3px] text-right text-[#7d7d7d]">{n}</td>
          </tr>
        ))}
      </tbody>
    </table>
    <nav className="mt-auto grid h-[22px] grid-cols-[repeat(8,34fr)_41fr] border-t border-[#7a7a7a] text-[15px] leading-5">
      {QUOTE_TABS.map((t, i) => (
        <button key={t} className={clsx("border-r border-[#6a6a6a]", i === 0 && "text-[#3cf0f0]")}>
          {t}
        </button>
      ))}
    </nav>
  </aside>
);

/* ---------- bottom bars ---------- */

const RedTile = ({ children }: { children: React.ReactNode }) => (
  <span className="flex size-[18px] items-center justify-center rounded-[2px] bg-linear-to-b from-[#ff7468] to-[#f81f26] text-[12px] leading-none text-white">
    {children}
  </span>
);

const SHORTCUTS: [React.ReactNode, string][] = [
  ["★", "自选股"],
  ["买", "买入"],
  ["卖", "卖出"],
  ["撤", "撤单"],
  [
    <svg key="a" width="12" height="12" viewBox="0 0 12 12">
      <circle cx="6" cy="5" r="3.500" fill="none" stroke="#fff" strokeWidth="2" />
      <path d="M3 11h6" stroke="#fff" strokeWidth="1.500" />
    </svg>,
    "资产全景",
  ],
  [
    <svg key="b" width="12" height="12" viewBox="0 0 12 12">
      <rect x="1" y="1" width="10" height="10" rx="1" fill="#fff" />
      <path d="M9 5H3l2-2M3 7h6L7 9" fill="none" stroke="#f8434a" />
    </svg>,
    "银证转账",
  ],
];

const INDICES = [
  ["上证", "3888.60", "13.34", "0.34%", "6458亿"],
  ["深证", "12984.08", "108.88", "0.85%", "9400亿"],
  ["北证", "1387.70", "5.39", "0.39%", "120.6亿"],
  ["创业", "3052.59", "21.29", "0.70%", "4606亿"],
];

const MiniBars = ({ red }: { red: number }) => (
  <svg width="59" height="18" viewBox="0 0 59 18" shapeRendering="crispEdges">
    <path d="M0 1h59v7H0z" fill="#fff" />
    <rect x="11" y="1" width={red} height="7" fill="#f00" />
    <rect x={11 + red} y="1" width="6" height="7" fill="#090" />
    <path d="M0 11.500h59M0 15.500h59" stroke="#f00" strokeWidth="3" strokeDasharray="9 1" />
  </svg>
);

const TrayIcons = () => (
  <div className="flex items-center gap-[15px]">
    <button aria-label="消息">
      <svg width="23" height="16" viewBox="0 0 23 16">
        <rect width="23" height="16" fill="#36405e" />
        <path d="M2 4c5 5 14 5 19 0" fill="none" stroke="#fff" strokeWidth="1.500" />
      </svg>
    </button>
    <button aria-label="键盘">
      <svg width="22" height="16" viewBox="0 0 22 16">
        <rect width="22" height="16" rx="2" fill="#36405e" />
        <path d="M3 4h16M3 7.500h16" stroke="#fff" strokeWidth="2" strokeDasharray="2 1" />
        <path d="M7 12h8" stroke="#fff" strokeWidth="2" />
      </svg>
    </button>
    <button aria-label="行情">
      <svg width="20" height="16" viewBox="0 0 20 16">
        <path d="M0 0h20v13H0zM5 14h10v2H5zM9 12h2v3H9z" fill="#36405e" />
        <path d="M4 8l4-3 3 3 5-3" fill="none" stroke="#fff" strokeWidth="1.500" />
      </svg>
    </button>
    <button className="px-[5px]" aria-label="信号">
      <svg width="15" height="16" viewBox="0 0 15 16">
        <path d="M1 1c-2 6 3 13 12 10zM5 11h4l2 5H3z" fill="#36405e" />
        <path d="M6 6l6-5M9 3l5 5" stroke="#36405e" strokeWidth="2" />
      </svg>
    </button>
    <button aria-label="警报">
      <svg width="18" height="17" viewBox="0 0 18 17">
        <path d="M4 14V9c0-6 10-6 10 0v5zM1 14h16v3H1z" fill="#ff2b30" />
        <path d="M9 0v2M2 3l2 2M16 3l-2 2" stroke="#ff2b30" strokeWidth="1.500" />
        <path d="M10 8l-2 3h2l-1 3" fill="none" stroke="#fff" />
      </svg>
    </button>
  </div>
);

const BottomBar = () => (
  <footer className="flex h-[55px] flex-col whitespace-nowrap border-b border-[#bdbdbd] bg-linear-to-b from-white via-[#f8f8f8] to-[#e6e6e6] text-[15px] text-[#1a1a1a]">
    <div className="flex h-[30px] items-center pl-2">
      <div className="flex w-[895px] gap-5">
        {SHORTCUTS.map(([icon, label]) => (
          <button key={label} className="flex items-center gap-[7px] leading-5">
            <RedTile>{icon}</RedTile>
            {label}
          </button>
        ))}
      </div>
      <button className="flex size-[18px] items-center justify-center border border-dotted border-[#aaa] bg-[#f0f0f0] leading-none text-[#777]">+</button>
      <span className="ml-[17px] flex w-[598px] justify-end overflow-hidden text-[#1458d2]">
        实、准确、完整和及时性。您须通过证监会指定披露媒体查阅相关信息，并自担投资风险。
      </span>
      <span className="ml-auto w-[49px] overflow-hidden text-[#1458d2]">本软件提</span>
    </div>
    <div className="flex h-[22px] items-center pl-1">
      <button className="mr-[11px] flex size-[18px] items-center justify-center rounded-[2px] bg-[#ff4a48]" aria-label="收起">
        <svg width="12" height="12" viewBox="0 0 12 12">
          <path d="M1 2l5 3 5-3M1 5l5 3 5-3M1 8l5 3 5-3" fill="none" stroke="#fff" />
        </svg>
      </button>
      {INDICES.map(([name, value, change, pct, amount]) => (
        <div key={name} className="mr-[15px] flex w-[272px] text-[#f5141c]">
          <span className="w-8 text-[#1a1a1a]">{name}</span>
          <span className="w-[66px]">{value}</span>
          <span className="w-[51px] text-right">{change}</span>
          <span className="w-[57px] text-right">{pct}</span>
          <span className="w-[66px] text-right text-[#1a1a1a]">{amount}</span>
        </div>
      ))}
      <span className="ml-[6px] flex gap-1">
        <MiniBars red={17} />
        <MiniBars red={15} />
      </span>
      <span className="ml-[11px] h-[18px] w-4 bg-[#999] text-center leading-[18px] text-white">2</span>
      <span className="ml-[5px]">已连接</span>
      <div className="ml-auto flex items-center gap-[19px] pr-[5px]">
        <TrayIcons />
        <time>16:38:17</time>
      </div>
    </div>
  </footer>
);

/* ---------- right tool strip ---------- */

const Arrow = ({ d }: { d: string }) => (
  <svg width="20" height="20" viewBox="0 0 20 20">
    <path d={d} fill="#fff" stroke="#3f78e8" strokeWidth="1.500" strokeLinejoin="round" />
  </svg>
);

const Tile = ({ children }: { children: React.ReactNode }) => (
  <svg width="20" height="19" viewBox="0 0 20 19">
    <rect x="1" y="1" width="18" height="17" fill="#fff" stroke="#4f90f0" strokeWidth="1.500" />
    <g fill="none">{children}</g>
  </svg>
);

const TextTile = ({ children, className }: { children: React.ReactNode; className?: string }) => (
  <span className={clsx("flex h-[18px] w-5 items-center justify-center border-2 bg-white text-[11px] leading-none", className ?? "border-[#4f90f0] text-[#2244d8]")}>
    {children}
  </span>
);

const Letter = ({ children }: { children: React.ReactNode }) => <span className="text-[14px] leading-none text-[#163c8c]">{children}</span>;

const STRIP: [string, React.ReactNode][] = [
  ["后退", <Arrow d="M1 10l7-7v4h11v6H8v4z" />],
  ["上移", <Arrow d="M10 1l7 8h-4v10H7V9H3z" />],
  ["下移", <Arrow d="M10 19l7-8h-4V1H7v10H3z" />],
  [
    "报价",
    <Tile>
      <path d="M3 4h6M3 7h6M3 10h6M3 13h6" stroke="#149614" strokeWidth="1.500" />
      <path d="M11 4h6M11 7h6M11 10h6" stroke="#f01414" strokeWidth="1.500" />
      <path d="M9 14l6-6 3 3-5 6h-3z" fill="#fff" stroke="#777" />
    </Tile>,
  ],
  [
    "列表",
    <Tile>
      <path d="M4.500 4v12" stroke="#f01414" strokeWidth="4" strokeDasharray="2 1" />
      <path d="M10 4v12" stroke="#149614" strokeWidth="4" strokeDasharray="2 1" />
      <path d="M15.500 4v12" stroke="#1414f0" strokeWidth="4" strokeDasharray="2 1" />
    </Tile>,
  ],
  ["走势", <Tile><path d="M2 14l5-5 3 2 8-7" stroke="#f01414" strokeWidth="1.500" /></Tile>],
  [
    "K线",
    <Tile>
      <path d="M5 5v9M15 2v9" stroke="#f01414" />
      <path d="M5 7v5M15 4v5" stroke="#f01414" strokeWidth="4" />
      <path d="M10 4v12" stroke="#149614" />
      <path d="M10 7v6" stroke="#149614" strokeWidth="4" />
    </Tile>,
  ],
  ["多窗", <Tile><path d="M6 3h11v9M3 6h11v10H3zM5 9h7M5 12h7" stroke="#2a6ae0" /></Tile>],
  ["F10", <TextTile>F10</TextTile>],
  [
    "树形",
    <Tile>
      <path d="M5 5v9h6M5 8h6" stroke="#2a6ae0" />
      <path d="M3 3h4v3H3zM11 6h5v3h-5zM11 12h5v3h-5z" fill="#ffd84a" stroke="#d69a14" />
    </Tile>,
  ],
  ["自选", <TextTile className="border-[#2a90f0] font-bold text-[#ff7a3c]">自</TextTile>],
  ["F12", <TextTile>F12</TextTile>],
  ["公式", <TextTile className="rounded border-[#2a9090] italic text-[#2244d8]">f(x)</TextTile>],
  ["圆", <Tile><circle cx="10" cy="9.500" r="4" stroke="#1a6ac8" strokeWidth="1.500" /></Tile>],
  ["", null],
  [
    "多线",
    <Tile>
      <path d="M2 7l3-2 3 2 3-2 3 2 4-3" stroke="#f01414" strokeWidth="1.300" />
      <path d="M2 13l3-2 3 2 3-2 3 2 4-3" stroke="#1414f0" strokeWidth="1.300" />
    </Tile>,
  ],
  ["量线", <Tile><path d="M2 9l4-3 3 2 4-4 5 4M2 15h16M4 15v-3M8 15v-2M12 15v-3M16 15v-2" stroke="#f03232" strokeWidth="1.300" /></Tile>],
  [
    "对比",
    <Tile>
      <path d="M2 14l2-4 2 3 3-7v8l4-6 2 4 3-8" stroke="#f01414" strokeWidth="1.300" />
      <path d="M11 3v12" stroke="#1414f0" />
    </Tile>,
  ],
  ["10%", <span className="text-[11px] leading-none text-[#2244d8]">10%</span>],
  [
    "画笔",
    <svg width="18" height="18" viewBox="0 0 18 18">
      <path d="M1 17l1-5L12 2l4 4L6 16z" fill="#f2a72a" stroke="#8a5a1e" />
      <path d="M12 2l2-1 3 3-1 2z" fill="#e66" stroke="#a44" />
      <path d="M1 17l1-3 2 2z" fill="#333" />
    </svg>,
  ],
  ["", null],
  ["F5", <TextTile>F5</TextTile>],
  [
    "刷新",
    <Tile>
      <path d="M5 8c1-4 7-5 9-1M15 11c-1 4-7 5-9 1" stroke="#4cae3c" strokeWidth="2.500" />
      <path d="M16 4v5h-5zM4 15v-5h5z" fill="#4cae3c" />
    </Tile>,
  ],
  ...["1", "5", "15", "30", "60", "日", "周", "月", "N", "多", "季", "年"].map((t): [string, React.ReactNode] => [t, <Letter>{t}</Letter>]),
];

const ToolStrip = () => (
  <nav className="flex w-[30px] shrink-0 flex-col border-l-2 border-[#c8c8c8] bg-[#f0f0f0] pb-[2px]">
    {STRIP.map(([label, icon], i) =>
      icon ? (
        <button key={i} aria-label={label} className="flex flex-1 items-center justify-center">
          {icon}
        </button>
      ) : (
        <span key={i} className="mx-1 h-[10px] border-b-2 border-[#b4b4b4]" />
      )
    )}
  </nav>
);

/* ---------- what peeks out behind the window ---------- */

const LeftEdge = () => (
  <div className="flex w-2 shrink-0 flex-col items-end border-r border-[#9a9a9a] bg-[#f6f6f6]">
    <span className="h-[55px] w-full bg-linear-to-b from-[#d6e9fb] to-[#a8d4fb]" />
    <svg className="mt-[411px]" width="4" height="84" viewBox="0 0 4 84">
      <path d="M1 0v14M1 22v15M1 45v14M1 67v15" stroke="#222" />
    </svg>
  </div>
);

const BottomEdge = () => (
  <div className="flex h-1 items-end overflow-hidden bg-[#f2f2f2] pl-[267px] text-[15px] leading-[12px] text-[#444]">
    <span className="w-[90px]">100</span>
    <span className="w-[863px]">0</span>
    <span>11-27 14:27</span>
  </div>
);

export default function App() {
  return (
    <div className="flex bg-white font-['Open_Sans','Noto_Sans_CJK_SC',sans-serif] text-[15px]">
      <LeftEdge />
      <div className="min-w-0 flex-1">
        <Toolbar />
        <div className="flex">
          <div className="min-w-0 flex-1">
            <main className="flex bg-black">
              <div className="min-w-0 flex-1">
                <PeriodBar />
                <ChartArea />
                <DateRow />
                <IndicatorTabs />
              </div>
              <QuotePanel />
            </main>
            <BottomBar />
            <BottomEdge />
          </div>
          <ToolStrip />
        </div>
      </div>
    </div>
  );
}
